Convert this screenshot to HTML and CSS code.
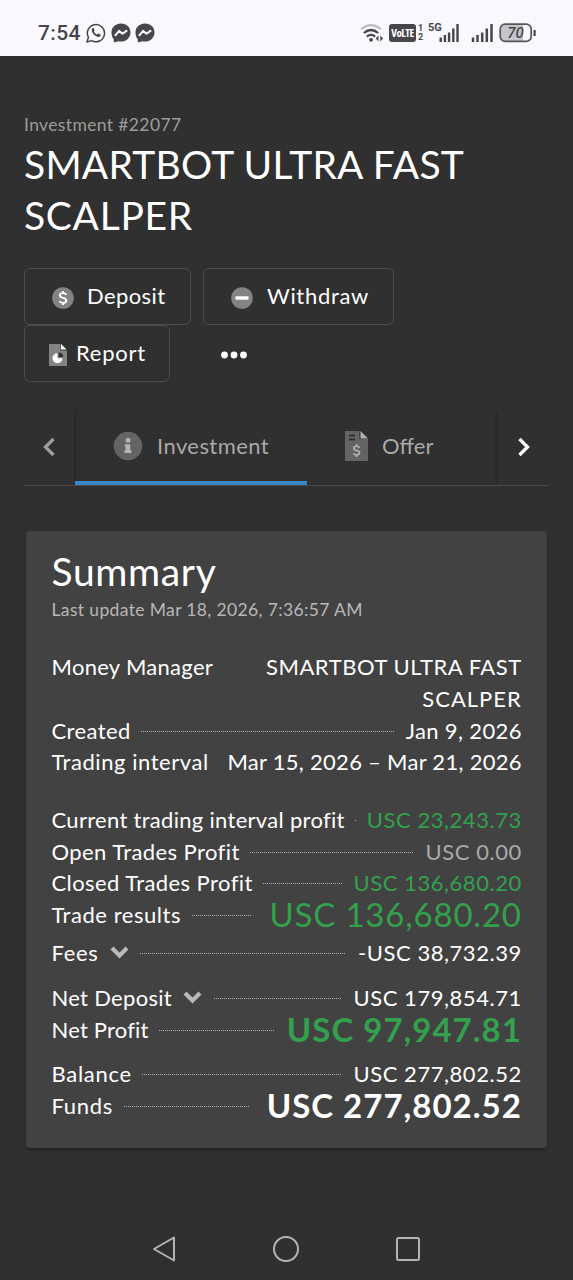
FILE: index.html
```html
<!DOCTYPE html>
<html lang="en">
<head>
<meta charset="utf-8">
<title>Investment #22077</title>
<link rel="stylesheet" href="styles.css">
</head>
<body>
<header class="status">
  <span class="clock">7:54</span>
  <svg class="st-app" width="20" height="20" viewBox="0 0 20 20"><path d="M1 19l1.4-4.7A8.6 8.6 0 1 1 5.6 17.600z" fill="none" stroke="#47474b" stroke-width="1.500" stroke-linejoin="round"/><path d="M6.300 5.200c.7-.5 1.300-.3 1.600.3l.7 1.500c.2.5-.5 1.100-.7 1.500.5 1.300 1.700 2.500 3.200 3.100.5-.3 1-1.200 1.500-1l1.800.9c.6.4.2 1.500-.5 2-1.500 1.100-4.200-.2-6-2-1.800-1.900-3-4.600-1.600-6.300z" fill="#47474b"/></svg>
  <svg class="st-app" width="20" height="20" viewBox="0 0 20 20"><path d="M10 .6c5.400 0 9.500 3.800 9.500 8.900s-4.100 9.100-9.500 9.100c-1 0-1.900-.1-2.800-.4l-4.300 1.400-.3-3.500C1.200 14.300.5 12 .5 9.500.5 4.400 4.600.6 10 .6z" fill="#47474b"/><path d="M4.400 12.300l3.600-4.400 3.500 2.800 4-2.800" fill="none" stroke="#f9f8ff" stroke-width="2" stroke-linejoin="round" stroke-linecap="round"/></svg>
  <svg class="st-app" width="20" height="20" viewBox="0 0 20 20"><path d="M10 .6c5.400 0 9.500 3.800 9.500 8.900s-4.100 9.100-9.500 9.100c-1 0-1.900-.1-2.800-.4l-4.300 1.400-.3-3.500C1.200 14.300.5 12 .5 9.500.5 4.400 4.600.6 10 .6z" fill="#47474b"/><path d="M4.400 12.300l3.600-4.400 3.500 2.800 4-2.800" fill="none" stroke="#f9f8ff" stroke-width="2" stroke-linejoin="round" stroke-linecap="round"/></svg>
  <span class="spacer"></span>
  <svg class="wifi" width="25" height="20" viewBox="0 0 25 20"><g fill="none" stroke-width="2.200"><path d="M1 6.200q10-8 20 0" stroke="#bdbdc2"/><path d="M3.800 10q7.200-6 14.400 0" stroke="#47474b"/><path d="M6.800 13.600q4.200-3.600 8.400 0" stroke="#47474b"/></g><circle cx="11" cy="16.800" r="1.900" fill="#47474b"/><path d="M18.500 12.500v6l-2.800-3zM20.300 12.500v6l2.800-3z" fill="#47474b"/></svg>
  <span class="volte">VoLTE</span>
  <span class="sims"><span>1</span><span>2</span></span>
  <span class="cell">
    <span class="gen">5G</span>
    <svg width="24" height="20" viewBox="0 0 24 20"><path d="M5.700 19v-4.500M9.900 19v-7M14.100 19V9.500M18.300 19V5.500M22.500 19V1" stroke="#47474b" stroke-width="2.400"/></svg>
  </span>
  <svg class="bars" width="23" height="20" viewBox="0 0 23 20"><path d="M2 19v-4.500M6.500 19v-7M11.200 19V9.500M15.800 19V5.500M20.500 19V1" stroke="#47474b" stroke-width="2.500"/></svg>
  <svg class="battery" width="38" height="20" viewBox="0 0 38 20"><path d="M6 2h18v16H6a4 4 0 0 1-4-4V6a4 4 0 0 1 4-4z" fill="#c5c5ca"/><rect x="1.200" y="1.200" width="31" height="17.200" rx="5" fill="none" stroke="#57575b" stroke-width="1.700"/><path d="M35.600 7v6" stroke="#47474b" stroke-width="2.200"/><text class="level" x="16.500" y="15.300" text-anchor="middle">70</text></svg>
</header>

<main class="page">
  <p class="eyebrow">Investment #22077</p>
  <h1 class="title">SMARTBOT ULTRA FAST<br><span class="wide">SCALPER</span></h1>

  <div class="actions">
    <button class="btn btn-deposit"><svg width="22" height="22" viewBox="0 0 22 22"><circle cx="11" cy="11" r="10.800" fill="#838383"/><path d="M14.300 7.700C13.700 6.600 12.600 6.100 11 6.100c-1.900 0-3.200.8-3.200 2.300 0 3.300 6.500 1.600 6.500 5 0 1.600-1.400 2.500-3.300 2.500-1.800 0-3-.7-3.500-1.900M11 4v2.500M11 15.500V18" fill="none" stroke="#fff" stroke-width="1.900"/></svg><span>Deposit</span></button>
    <button class="btn btn-withdraw"><svg width="22" height="22" viewBox="0 0 22 22"><circle cx="11" cy="11" r="10.800" fill="#838383"/><path d="M4.500 11h13" stroke="#fff" stroke-width="3.400"/></svg><span>Withdraw</span></button>
    <button class="btn btn-report"><svg width="18" height="22" viewBox="0 0 18 22"><path d="M0 0h11.500v6.500H18V22H0z" fill="#838383"/><path d="M12 0l5.500 5.500H12z" fill="#fff"/><path d="M8.500 9.300v5h5A5 5 0 1 1 8.500 9.300z" fill="#fff"/><path d="M9.700 8.600a4.600 4.600 0 0 1 4.500 4.500H9.700z" fill="#303030"/></svg><span>Report</span></button>
    <svg class="more" width="28" height="8" viewBox="0 0 28 8"><g fill="#fff"><circle cx="4.500" cy="4" r="3.400"/><circle cx="14" cy="4" r="3.400"/><circle cx="23.500" cy="4" r="3.400"/></g></svg>
  </div>

  <nav class="tabs">
    <div class="arrow arrow-left"><svg width="14" height="20" viewBox="0 0 14 20"><path d="M11.500 2L3.500 10l8 8" fill="none" stroke="#9e9e9e" stroke-width="3.300"/></svg></div>
    <div class="tab-track">
      <div class="tab tab-active"><svg width="30" height="30" viewBox="0 0 30 30"><circle cx="15" cy="15" r="14.300" fill="#646464"/><circle cx="15" cy="9.300" r="2.500" fill="#b4b4b4"/><path d="M11.800 13.300h5.400v6h1.200v2.600h-6.900v-2.600h1.100v-3.500h-.8z" fill="#b4b4b4"/></svg><span>Investment</span></div>
      <div class="tab tab-offer"><svg width="24" height="30" viewBox="0 0 24 30"><path d="M0 0h14.500v8H23v22H0z" fill="#646464"/><path d="M15.500 0L23 7.500h-7.500z" fill="#b4b4b4"/><path d="M4 4.500h6M4 8.500h6" stroke="#303030" stroke-width="1.800"/><path d="M14.500 16.800c-.5-1-1.500-1.500-2.900-1.500-1.700 0-2.900.7-2.900 2 0 2.900 5.900 1.400 5.900 4.400 0 1.400-1.300 2.200-3 2.200-1.600 0-2.800-.6-3.200-1.700M11.500 13v2.500M11.500 23.500V26" fill="none" stroke="#b4b4b4" stroke-width="1.600"/></svg><span>Offer</span></div>
    </div>
    <div class="arrow arrow-right"><svg width="14" height="20" viewBox="0 0 14 20"><path d="M2.500 2l8 8-8 8" fill="none" stroke="#fff" stroke-width="3.300"/></svg></div>
  </nav>

  <section class="card">
    <h2 class="card-title">Summary</h2>
    <p class="updated">Last update Mar 18, 2026, 7:36:57 AM</p>

    <dl class="rows">
      <div class="row"><dt class="tight">Money Manager</dt><dd class="name">SMARTBOT ULTRA FAST<br><span class="wide-sm">SCALPER</span></dd></div>
      <div class="row"><dt>Created</dt><i class="dots"></i><dd class="date">Jan 9, 2026</dd></div>
      <div class="row"><dt class="medium">Trading interval</dt><dd class="range">Mar 15, 2026 – Mar 21, 2026</dd></div>
    </dl>
    <dl class="rows rows-trades">
      <div class="row"><dt class="tight">Current trading interval profit</dt><i class="dots dots-min"></i><dd class="gain">USC 23,243.73</dd></div>
      <div class="row"><dt>Open Trades Profit</dt><i class="dots"></i><dd class="zero">USC 0.00</dd></div>
      <div class="row"><dt>Closed Trades Profit</dt><i class="dots"></i><dd class="gain">USC 136,680.20</dd></div>
      <div class="row"><dt class="medium">Trade results</dt><i class="dots dots-short"></i><dd class="gain big">USC 136,680.20</dd></div>
    </dl>
    <dl class="rows rows-fees">
      <div class="row"><dt class="looser">Fees</dt><svg class="chev" width="21" height="14" viewBox="0 0 21 14"><path d="M3 3l7.500 7.500L18 3" fill="none" stroke="#b9b9b9" stroke-width="4.200"/></svg><i class="dots"></i><dd>-USC 38,732.39</dd></div>
    </dl>
    <dl class="rows rows-net">
      <div class="row"><dt class="tight">Net Deposit</dt><svg class="chev" width="21" height="14" viewBox="0 0 21 14"><path d="M3 3l7.500 7.500L18 3" fill="none" stroke="#b9b9b9" stroke-width="4.200"/></svg><i class="dots"></i><dd>USC 179,854.71</dd></div>
      <div class="row"><dt class="tighter">Net Profit</dt><i class="dots"></i><dd class="gain big bold">USC 97,947.81</dd></div>
    </dl>
    <dl class="rows rows-funds">
      <div class="row"><dt class="looser">Balance</dt><i class="dots"></i><dd>USC 277,802.52</dd></div>
      <div class="row"><dt class="looser">Funds</dt><i class="dots dots-short"></i><dd class="big bold">USC 277,802.52</dd></div>
    </dl>
  </section>
</main>

<footer class="sysnav">
  <svg width="26" height="28" viewBox="0 0 26 28"><path d="M23 2.500v23L3 14z" fill="none" stroke="#b4b4b4" stroke-width="2" stroke-linejoin="round"/></svg>
  <svg width="28" height="28" viewBox="0 0 28 28"><circle cx="14" cy="14" r="12" fill="none" stroke="#b4b4b4" stroke-width="2"/></svg>
  <svg width="26" height="28" viewBox="0 0 26 28"><rect x="2" y="3" width="22" height="22" rx="1.500" fill="none" stroke="#b4b4b4" stroke-width="2"/></svg>
</footer>
</body>
</html>
```
FILE: styles.css
```css
* { box-sizing: border-box; }
html, body { margin: 0; height: 100%; }
body {
  display: flex;
  flex-direction: column;
  height: 1280px;
  overflow: hidden;
  background: #303030;
  color: #fff;
  font-family: Lato, "Open Sans", sans-serif;
  font-size: 22px;
  letter-spacing: .42px;
}
h1, h2, p, dl, dd { margin: 0; font-weight: 400; }
svg { display: block; flex: none; }

/* Phone status bar */
.status {
  flex: none;
  display: flex;
  align-items: center;
  height: 56px;
  padding: 10px 36px 0 38px;
  background: #f9f8ff;
  color: #47474b;
  letter-spacing: 0;
}
.clock { width: 48px; font: 500 21px/24px Roboto, sans-serif; letter-spacing: .4px; }
.st-app { margin-right: 4.500px; }
.spacer { flex: 1; }
.wifi { margin-right: 4px; }
.volte {
  width: 27px;
  height: 18px;
  border-radius: 3px;
  background: #47474b;
  color: #fff;
  font: 700 11px/18px "Open Sans", sans-serif;
  font-stretch: condensed;
  letter-spacing: -.5px;
  text-align: center;
}
.sims { display: grid; width: 12px; padding-left: 2px; font: 700 9px/9px Roboto, sans-serif; }
.cell { position: relative; width: 32px; margin-right: 10px; }
.gen { position: absolute; left: 0; top: -1px; font: 700 11px/12px Roboto, sans-serif; }
.cell svg { margin-left: 7px; width: 24px; }
.bars { margin-right: 5px; margin-left: 1px; }
.level { font: italic 500 15px Roboto, sans-serif; fill: #47474b; }

/* Page heading */
.page { flex: 1; padding: 57px 24px 0; }
.eyebrow { font-size: 17.500px; line-height: 24px; color: #9c9c9c; letter-spacing: .37px; }
.title { margin-top: 2px; font-size: 39px; line-height: 51px; letter-spacing: .25px; }
.wide { letter-spacing: .7px; }

.actions { display: flex; flex-wrap: wrap; align-items: center; margin-top: 27px; }
.btn {
  display: flex;
  align-items: center;
  height: 57px;
  padding: 0;
  border: 1.500px solid #4c4c4c;
  border-radius: 6px;
  background: transparent;
  color: #fff;
  font: inherit;
}
.btn span { padding-bottom: 2px; }
.btn svg { margin-top: 3px; }
.btn-deposit { width: 167px; margin-right: 12px; padding-left: 27px; letter-spacing: .4px; }
.btn-deposit svg { margin-right: 13px; }
.btn-withdraw { width: 191px; margin-right: 60px; padding-left: 27px; letter-spacing: .69px; }
.btn-withdraw svg { margin-right: 14px; }
.btn-report { width: 146px; padding-left: 24px; letter-spacing: .77px; }
.btn-report svg { margin-right: 9px; }
.more { margin: 3px 0 0 50px; }

/* Tab strip */
.tabs { display: flex; width: 525px; height: 77px; margin-top: 27px; border-bottom: 1px solid #4a4a4a; color: #a9a9a9; }
.arrow { display: flex; align-items: center; justify-content: center; width: 51px; flex: none; }
.arrow svg { margin-bottom: 1px; }
.arrow-left { border-right: 1px solid #2b2b2b; box-shadow: 2px 0 3px -2px rgba(0, 0, 0, .35); }
.arrow-right { box-shadow: -3px 0 3px -2px rgba(0, 0, 0, .3); }
.tab-track { display: flex; flex: 1; }
.tab { display: flex; align-items: center; }
.tab span { padding-bottom: 4px; }
.tab svg { margin-bottom: 2px; }
.tab-active { width: 232px; height: 76px; padding-left: 38px; padding-top: 4px; border-bottom: 4px solid #3a87c8; }
.tab-active svg { margin-right: 14px; }
.tab-offer { padding-left: 38px; letter-spacing: 0; }
.tab-offer svg { margin-right: 13px; }

/* Summary card */
.card {
  width: 521px;
  height: 617px;
  margin: 45px 0 0 1.500px;
  padding: 17px 25px 0 26px;
  border-radius: 4px;
  background: #424242;
  box-shadow: 0 2px 3px rgba(0, 0, 0, .3);
}
.card-title { font-size: 39px; line-height: 46px; letter-spacing: .66px; }
.updated { margin: 4px 0 29px; font-size: 17.500px; line-height: 24px; color: #b8b8b8; letter-spacing: .36px; }
.row { display: flex; height: 31.800px; line-height: 31.800px; white-space: nowrap; }
.row:has(.name) { height: 63.600px; }
.tighter { letter-spacing: .2px; }
.tight { letter-spacing: .3px; }
.medium { letter-spacing: .55px; }
.looser { letter-spacing: .7px; }
dd { margin-left: auto; text-align: right; letter-spacing: .54px; margin-right: -.3px; }
.wide-sm { letter-spacing: 1px; }
.date { letter-spacing: .36px; }
.range { letter-spacing: .28px; }
.dots {
  flex: 1;
  height: 1px;
  margin: 16px 12px 0 10.500px;
  background: repeating-linear-gradient(90deg, #b0b0b0 0 1px, transparent 1px 2px);
}
.dots-min { flex: none; width: 1px; margin-right: 0; }
.dots-short { margin-right: 18px; }
.gain { color: #32a04c; }
.zero { color: #a9a9a9; }
.big { font-size: 33px; line-height: 30px; letter-spacing: .8px; }
.big.bold { font-weight: 700; letter-spacing: 1px; }
.chev { margin: 8px 0 0 10px; }
.rows-trades { margin-top: 25.600px; }
.rows-fees { margin-top: 6px; }
.rows-net { margin-top: 13px; }
.rows-funds { margin-top: 12.500px; }

/* Android navigation bar */
.sysnav { flex: none; display: flex; justify-content: space-between; align-items: center; height: 62px; padding: 0 152px 0 151px; }
```
